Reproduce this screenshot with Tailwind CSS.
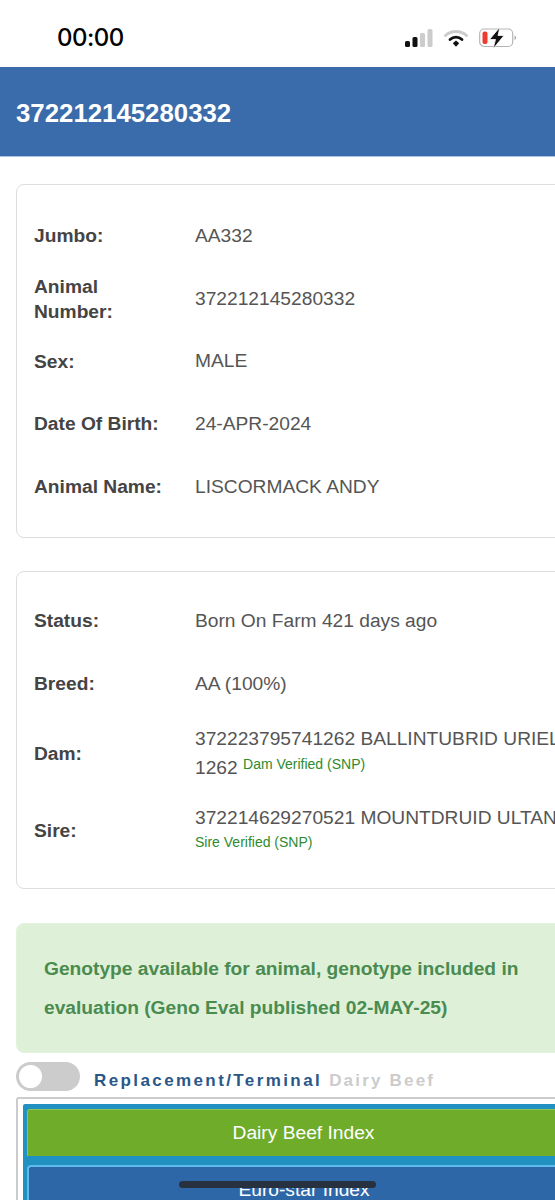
<!DOCTYPE html>
<html lang="en">
<head>
    <meta charset="UTF-8">
    <meta name="viewport" content="width=device-width, initial-scale=1.0">
    <title>Animal Details</title>
    <script src="https://cdn.jsdelivr.net/npm/@tailwindcss/browser@4"></script>
</head>
<body class="bg-white font-['Liberation_Sans',sans-serif] text-[#555] overflow-hidden">
<div class="relative h-[1200px] w-[555px] overflow-hidden">
    <!-- status bar -->
    <div class="h-[67px] flex items-center justify-between pl-[57px] pr-[38px]">
        <span class="font-['Inter',sans-serif] font-medium text-[24px] text-black mt-[8px] -tracking-[0.5px]">00:00</span>
        <div class="flex items-center gap-[11px] mt-[8px]">
            <svg width="28" height="18" viewBox="0 0 28 18"><rect x="0" y="12" width="5" height="6" rx="1.5" fill="#111"/><rect x="7.5" y="8" width="5" height="10" rx="1.5" fill="#111"/><rect x="15" y="4" width="5" height="14" rx="1.5" fill="#ccc"/><rect x="22.5" y="0" width="5" height="18" rx="1.5" fill="#ccc"/></svg>
            <svg width="24" height="18" viewBox="0 0 24 18" fill="none"><path d="M1.5 6.5C7 1 17 1 22.5 6.5" stroke="#ccc" stroke-width="3" stroke-linecap="round"/><path d="M6 10.5C9.5 7.3 14.5 7.3 18 10.5" stroke="#111" stroke-width="2.8" stroke-linecap="round"/><path d="M8.8 14.2 12 11.6l3.2 2.6-3.2 3.5z" fill="#111"/></svg>
            <svg width="38" height="22" viewBox="0 0 38 22" fill="none"><rect x="0.7" y="2" width="33" height="17.5" rx="4.5" stroke="#b5b5b5" stroke-width="1.2"/><rect x="3.5" y="4.5" width="5" height="12.5" rx="2" fill="#ee3b2f"/><path d="M35.5 8.5c1.2.5 1.6 1.2 1.6 2.2s-.4 1.7-1.6 2.2z" fill="#aaa"/><path d="M21 0 10.5 12.5h6L14 22l11-13.5h-6z" fill="#111" stroke="#fff" stroke-width="0.8"/></svg>
        </div>
    </div>

    <!-- header -->
    <header class="h-[90px] bg-[#3a6cab] flex items-center pl-4 pt-[3px] border-b border-[#a9c6e4]">
        <h1 class="text-white font-bold text-[25.8px]">372212145280332</h1>
    </header>

    <div class="w-[640px] pl-4">
        <!-- animal details -->
        <div class="mt-[27px] h-[354px] border-[1.5px] border-[#ddd] rounded-lg px-[17px] py-[20px] text-[19.2px]">
            <div class="grid grid-cols-[161px_1fr] auto-rows-[62.5px] items-center">
                <div class="font-bold text-[#444] leading-[25px] -mt-[2px]">Jumbo:</div><div>AA332</div>
                <div class="font-bold text-[#444] leading-[25px]">Animal<br>Number:</div><div class="mt-[2px]">372212145280332</div>
                <div class="font-bold text-[#444] leading-[25px]">Sex:</div><div>MALE</div>
                <div class="font-bold text-[#444] leading-[25px]">Date Of Birth:</div><div class="mt-[2px]">24-APR-2024</div>
                <div class="font-bold text-[#444] leading-[25px]">Animal Name:</div><div class="mt-[2px]">LISCORMACK ANDY</div>
            </div>
        </div>

        <!-- status, parents -->
        <div class="mt-[33px] h-[318px] border-[1.5px] border-[#ddd] rounded-lg px-[17px] py-[18px] text-[19.2px]">
            <div class="grid grid-cols-[161px_1fr] grid-rows-[62.5px_63.5px_76px_78px] items-center">
                <div class="font-bold text-[#444]">Status:</div><div class="mt-[1px]">Born On Farm 421 days ago</div>
                <div class="font-bold text-[#444]">Breed:</div><div>AA (100%)</div>
                <div class="font-bold text-[#444]">Dam:</div>
                <div class="leading-[29px]">372223795741262 BALLINTUBRID URIEL<br>1262 <span class="relative -top-[5px] text-[14px] text-[#2e8b2e]">Dam Verified (SNP)</span></div>
                <div class="font-bold text-[#444]">Sire:</div>
                <div class="leading-[25px] -mt-[2px]">372214629270521 MOUNTDRUID ULTAN<br><span class="text-[14px] text-[#2e8b2e] block">Sire Verified (SNP)</span></div>
            </div>
        </div>

        <!-- genotype alert -->
        <div class="mt-[34px] h-[130px] bg-[#dff0d8] rounded-lg pl-[27px] pt-[26px] font-bold text-[19.2px] leading-[38.5px] text-[#4a8b50] border border-[#e3f1dd]">
            Genotype available for animal, genotype included in<br>evaluation (Geno Eval published 02-MAY-25)
        </div>

        <!-- index type toggle -->
        <div class="mt-[9px] flex items-center h-[29px]">
            <div class="w-[64px] h-[29px] rounded-full bg-[#ccc] p-[3px]">
                <div class="w-[23px] h-[23px] rounded-full bg-white"></div>
            </div>
            <span class="ml-[14px] mt-[8px] font-bold text-[17px] tracking-[2.4px] text-[#2a5788]">Replacement/Terminal</span>
            <span class="ml-[7px] mt-[8px] font-bold text-[17px] tracking-[2.2px] text-[#ccc]">Dairy Beef</span>
        </div>

        <!-- index tabs -->
        <div class="mt-[6px] h-[110px] border-2 border-[#ccc] rounded-t-[3px] pl-[5px] pt-[5px]">
            <div class="h-[110px] bg-[#2191c2] pl-[4px] pt-[5px] rounded-t-[2px]">
                <div class="h-[47px] w-[552px] bg-[#6fac2a] border-t border-l border-[#8cc65a] rounded-tl-[3px] flex items-center justify-center text-white text-[19.2px]">Dairy Beef Index</div>
                <div class="mt-[9px] h-[60px] w-[552px] bg-[#2e67a8] border-t-2 border-l-2 border-[#5dbbea] rounded-tl-[4px] flex justify-center pt-[9px] text-white text-[19.2px]">Euro-star Index</div>
            </div>
        </div>
    </div>

    <!-- home indicator -->
    <div class="absolute left-[179px] top-[1181px] w-[197px] h-[7px] rounded-full bg-[#27313f]"></div>
</div>
</body>
</html>
